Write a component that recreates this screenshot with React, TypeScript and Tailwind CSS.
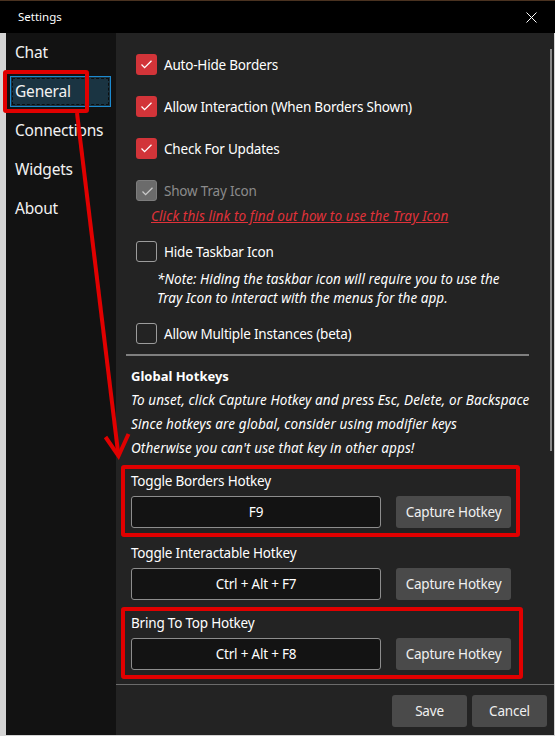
import { ReactNode } from "react";

const FONT = { fontFamily: '"Noto Sans", "Open Sans", sans-serif' };

// =========================
// CHECKBOX ROW
// =========================
const Check = ({ state }: { state: "on" | "off" | "disabled" }) => {
  if (state === "off") {
    return <div className="w-[21px] h-[21px] rounded-[3px] border border-[#9c9c9c]" />;
  }

  const disabled = state === "disabled";

  return (
    <div
      className={
        disabled
          ? "w-[21px] h-[21px] rounded-[3px] bg-[#6b6b6b] border border-[#7d7d7d]"
          : "w-[21px] h-[21px] rounded-[3px] bg-[#d23439]"
      }
    >
      <svg width="21" height="21" viewBox="0 0 21 21" className="block">
        <path
          d="M5.5 10.5 L8.6 13.6 L15.5 6.7"
          fill="none"
          stroke={disabled ? "#c9c9c9" : "#ffffff"}
          strokeWidth="1.3"
        />
      </svg>
    </div>
  );
};

const CheckRow = ({
  state,
  label,
  className = "",
}: {
  state: "on" | "off" | "disabled";
  label: string;
  className?: string;
}) => (
  <div className={`flex items-center h-[21px] ml-[20px] ${className}`}>
    <Check state={state} />
    <span
      className={`ml-[7px] text-[13.5px] tracking-[-0.2px] leading-[20px] ${
        state === "disabled" ? "text-[#8b8b8b]" : "text-white"
      }`}
    >
      {label}
    </span>
  </div>
);

// =========================
// HOTKEY GROUP
// =========================
const HotkeyGroup = ({
  label,
  value,
  marked,
  size,
}: {
  label: string;
  value: string;
  marked?: boolean;
  size: string;
}) => (
  <div
    className={`ml-[5px] border-4 rounded-[3px] pl-[6px] ${size} ${
      marked ? "border-[#e10000]" : "border-transparent"
    }`}
  >
    <div className="text-[13.5px] tracking-[-0.2px] leading-[24px] text-white">{label}</div>
    <div className="flex mt-[3px]">
      <div className="w-[250px] h-[32px] bg-[#131313] border border-[#8d8d8d] rounded-[3px] flex items-center justify-center text-[13.5px] tracking-[-0.2px] text-white">
        {value}
      </div>
      <button className="ml-[15px] w-[115px] h-[32px] bg-[#4a4a4a] rounded-[3px] text-[13.5px] tracking-[-0.2px] text-[#f0f0f0]">
        Capture Hotkey
      </button>
    </div>
  </div>
);

const NavItem = ({ children, active }: { children: ReactNode; active?: boolean }) => (
  <div
    className={`h-[31px] mb-[8px] ml-[4px] mr-[5px] flex items-center pl-[4px] pt-[1px] text-[15.5px] tracking-[-0.2px] text-[#f2f2f2] border ${
      active
        ? "bg-[#1a3442] border-[#1c8ad0] outline outline-1 outline-dashed outline-[#0d0d0d] -outline-offset-[3px]"
        : "border-transparent"
    }`}
  >
    {children}
  </div>
);

const App = () => {
  return (
    <div className="relative w-[555px] h-[736px] bg-[#d4d4d4] overflow-hidden flex flex-col" style={FONT}>

      {/* TITLE BAR */}
      <div className="h-[33px] bg-black flex items-center justify-between pl-[18px] pr-[18px] border-t border-[#4a3220]">
        <span className="text-[11.5px] text-white">Settings</span>
        <svg width="11" height="11" viewBox="0 0 11 11">
          <path d="M0.5 0.5 L10.5 10.5 M10.5 0.5 L0.5 10.5" stroke="#ffffff" strokeWidth="1" />
        </svg>
      </div>

      {/* BODY */}
      <div className="flex flex-1 ml-[6px] mr-[1px] mb-[1px] min-h-0">

        {/* SIDEBAR */}
        <div className="w-[110px] bg-[#121212] pt-[4px]">
          <NavItem>Chat</NavItem>
          <NavItem active>General</NavItem>
          <NavItem>Connections</NavItem>
          <NavItem>Widgets</NavItem>
          <NavItem>About</NavItem>
        </div>

        {/* MAIN */}
        <div className="flex-1 bg-[#232323] flex flex-col min-h-0">

          {/* SCROLL AREA */}
          <div className="relative flex-1 overflow-hidden pt-[21px]">
            <CheckRow state="on" label="Auto-Hide Borders" />
            <CheckRow state="on" label="Allow Interaction (When Borders Shown)" className="mt-[21px]" />
            <CheckRow state="on" label="Check For Updates" className="mt-[21px]" />
            <CheckRow state="disabled" label="Show Tray Icon" className="mt-[21px]" />

            <div className="mt-[6px] ml-[35px] text-[13.5px] tracking-[0.1px] leading-[18px] italic underline text-[#e0323a]">
              Click this link to find out how to use the Tray Icon
            </div>

            <CheckRow state="off" label="Hide Taskbar Icon" className="mt-[16px]" />

            <div className="mt-[8px] ml-[41px] text-[13.5px] tracking-[0.05px] leading-[19px] italic text-white">
              *Note: Hiding the taskbar icon will require you to use the
              <br />
              Tray Icon to interact with the menus for the app.
            </div>

            <CheckRow state="off" label="Allow Multiple Instances (beta)" className="mt-[15px]" />

            <div className="mt-[10px] ml-[10px] w-[403px] h-[2px] bg-[#7f7f7f]" />

            <div className="mt-[8px] ml-[15px] text-[13.5px] leading-[24px] text-white">
              <div className="font-bold text-[13px]">Global Hotkeys</div>
              <div className="italic tracking-[0.1px]">To unset, click Capture Hotkey and press Esc, Delete, or Backspace</div>
              <div className="italic tracking-[0.1px]">Since hotkeys are global, consider using modifier keys</div>
              <div className="italic tracking-[0.1px]">Otherwise you can&apos;t use that key in other apps!</div>
            </div>

            <div className="mt-[5px]">
              <HotkeyGroup label="Toggle Borders Hotkey" value="F9" marked size="w-[399px] h-[72px]" />
              <HotkeyGroup label="Toggle Interactable Hotkey" value="Ctrl + Alt + F7" size="w-[402px] h-[70px]" />
              <HotkeyGroup label="Bring To Top Hotkey" value="Ctrl + Alt + F8" marked size="w-[402px] h-[72px]" />
            </div>

            {/* scrollbar thumb */}
            <div className="absolute right-[2px] top-[16px] w-[2px] h-[402px] bg-[#898989]" />
          </div>

          {/* FOOTER */}
          <div className="h-[51px] border-t border-[#6b6b6b] flex justify-end items-start pt-[10px] pr-[7px] gap-[5px]">
            <button className="w-[75px] h-[32px] bg-[#4a4a4a] rounded-[3px] text-[13.5px] tracking-[-0.2px] text-[#f0f0f0]">Save</button>
            <button className="w-[75px] h-[32px] bg-[#4a4a4a] rounded-[3px] text-[13.5px] tracking-[-0.2px] text-[#f0f0f0]">Cancel</button>
          </div>
        </div>
      </div>

      {/* ANNOTATIONS */}
      <div className="absolute left-[3px] top-[70px] w-[86px] h-[43px] border-4 border-[#e10000] rounded-[3px] pointer-events-none" />
      <svg className="absolute left-0 top-0 pointer-events-none" width="555" height="736" viewBox="0 0 555 736">
        <path d="M77 113 L118 452" stroke="#e10000" strokeWidth="4" fill="none" />
        <path d="M105.5 437 L118.5 456 L128.5 434" stroke="#e10000" strokeWidth="4" fill="none" strokeLinejoin="miter" />
      </svg>
    </div>
  );
};

export default App;
